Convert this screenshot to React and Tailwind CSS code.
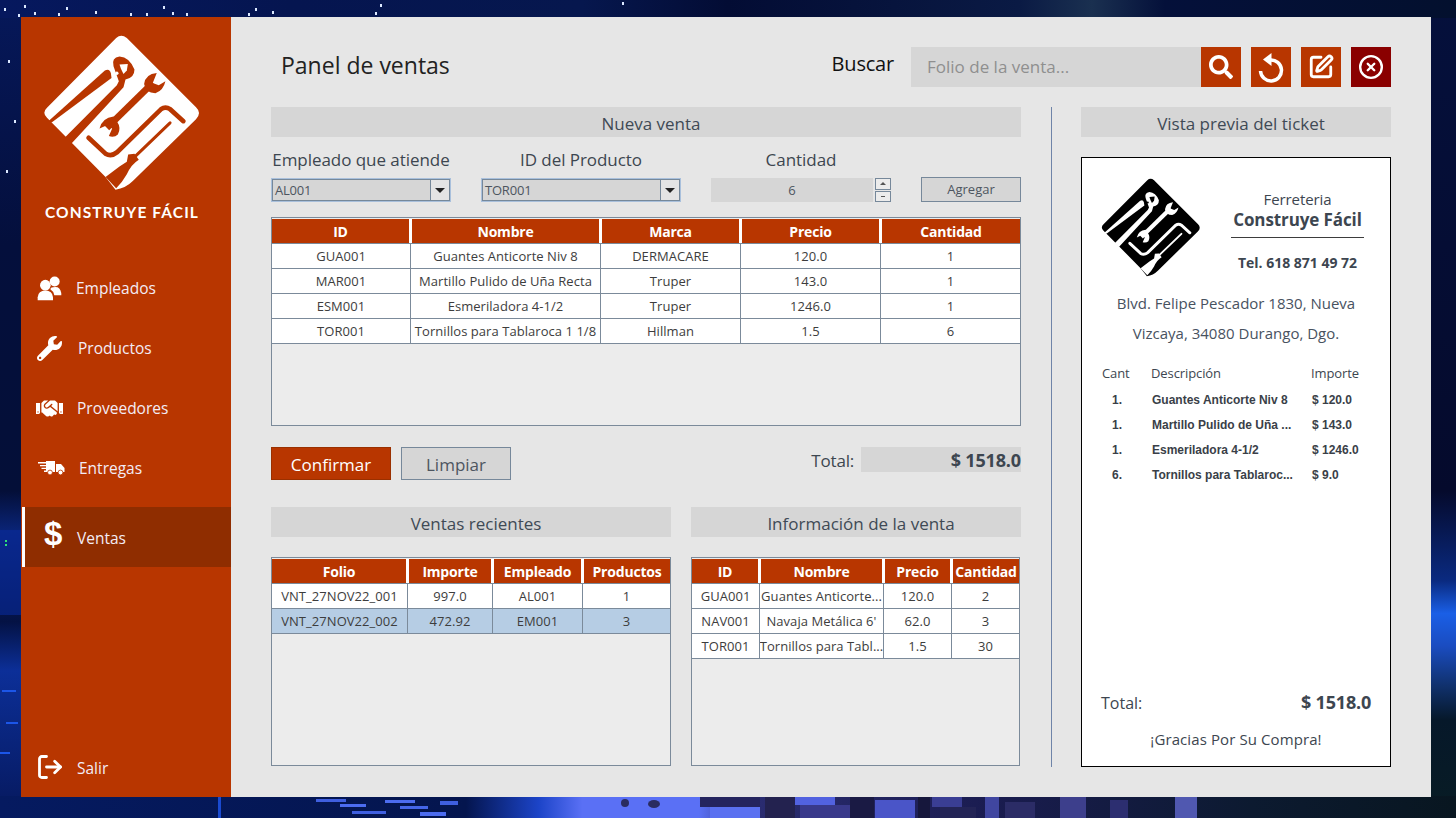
import { FaWrench, FaHandshake, FaSearch } from "react-icons/fa";
import { CircleX, LogOut, SquarePen } from "lucide-react";

function PeopleIcon() {
  return (
    <svg viewBox="50 42 75 77" className="w-[25px] h-[26px]" fill="#fff">
      <circle cx="75" cy="72" r="16" />
      <path d="M52 117V108Q54 88 75 88Q96 88 98 108V117Z" />
      <circle cx="103" cy="61" r="15" />
      <path d="M92 80Q102 76 112 78Q123 84 123 102H102Q100 90 90 84Z" />
    </svg>
  );
}

function TruckIcon() {
  return (
    <svg viewBox="0 0 27 14" className="w-[27px] h-[14px]" fill="#fff">
      <path d="M0 1H17V2.4H0ZM2 4H17V5.2H2ZM3.5 6.8H17V8H3.5ZM6 9.6H17V11H6Z" />
      <path d="M8 0H17V11H8Z" />
      <path d="M18 3H23L26.5 7V11H18Z" />
      <circle cx="12" cy="11.5" r="2.4" stroke="#b83600" strokeWidth="0.8" />
      <circle cx="22.5" cy="11.5" r="2.4" stroke="#b83600" strokeWidth="0.8" />
    </svg>
  );
}

function ResetIcon() {
  return (
    <svg viewBox="0 0 40 40" className="w-10 h-10" fill="none">
      <path d="M19 13A10.5 10.5 0 1 1 9.5 24" stroke="#fff" strokeWidth="3.5" />
      <path d="M20.5 6V19L12 12.5Z" fill="#fff" />
    </svg>
  );
}

const NAV = [
  { icon: <PeopleIcon />, label: "Empleados", iconBox: "pl-[16px] w-[55px]" },
  { icon: <FaWrench size={25} className="text-white" />, label: "Productos", iconBox: "pl-[16px] w-[57px]" },
  { icon: <FaHandshake size={27} className="text-white" />, label: "Proveedores", iconBox: "pl-[15px] w-[56px]" },
  { icon: <TruckIcon />, label: "Entregas", iconBox: "pl-[17px] w-[58px]" },
];

const PRODUCTS = [
  ["GUA001", "Guantes Anticorte Niv 8", "DERMACARE", "120.0", "1"],
  ["MAR001", "Martillo Pulido de Uña Recta", "Truper", "143.0", "1"],
  ["ESM001", "Esmeriladora 4-1/2", "Truper", "1246.0", "1"],
  ["TOR001", "Tornillos para Tablaroca 1 1/8", "Hillman", "1.5", "6"],
];
const SALES = [
  ["VNT_27NOV22_001", "997.0", "AL001", "1"],
  ["VNT_27NOV22_002", "472.92", "EM001", "3"],
];
const SALE_INFO = [
  ["GUA001", "Guantes Anticorte...", "120.0", "2"],
  ["NAV001", "Navaja Metálica 6'", "62.0", "3"],
  ["TOR001", "Tornillos para Tabl...", "1.5", "30"],
];
const TICKET = [
  ["1.", "Guantes Anticorte Niv 8", "$ 120.0"],
  ["1.", "Martillo Pulido de Uña ...", "$ 143.0"],
  ["1.", "Esmeriladora 4-1/2", "$ 1246.0"],
  ["6.", "Tornillos para Tablaroc...", "$ 9.0"],
];

const STARS = [[4,8],[18,14],[24,5],[34,12],[58,13],[66,7],[95,11],[130,13],[146,13],[163,6],[172,12],[186,13],[248,13],[255,8],[272,11],[375,12],[380,4],[622,2],[8,60],[14,120],[6,170]];
const BOTTOM_PATCHES = [
  // [x, width, y, height, colour] irregular paint strokes of the wallpaper
  [316,30,799,3,"#3f5fe0"],[340,26,804,3,"#4c6cf0"],[352,34,811,3,"#3f5fe0"],[385,30,800,3,"#4c6cf0"],[400,28,806,3,"#4566e8"],[420,26,812,4,"#4c6cf0"],[440,18,801,4,"#3f5fe0"],[218,3,797,21,"#1a4ad0"],
  [700,60,797,10,"#24245e"],[710,50,807,11,"#5a70f0"],[765,30,797,21,"#23224f"],[795,40,797,8,"#5262e0"],[800,50,805,13,"#39398a"],[850,24,797,21,"#1a1a44"],[875,40,800,18,"#4a55c8"],[918,12,797,21,"#16173c"],[932,30,797,10,"#3a3e94"],[940,36,807,11,"#232456"],[985,14,797,21,"#4046a0"],[1005,30,802,16,"#2b2c66"],[1060,26,797,21,"#3d3f8c"],[1110,18,800,18,"#2c2e70"],[1175,22,797,21,"#5058b0"],
];

function Wallpaper() {
  return (
    <svg className="absolute inset-0" width="1456" height="818" viewBox="0 0 1456 818" preserveAspectRatio="none">
      <defs>
        <linearGradient id="left" x1="0" y1="0" x2="0" y2="1">
          <stop offset="0" stopColor="#06185a" />
          <stop offset="0.3" stopColor="#040f3c" />
          <stop offset="0.6" stopColor="#040f38" />
          <stop offset="0.65" stopColor="#0a2478" />
          <stop offset="0.76" stopColor="#041244" />
          <stop offset="0.82" stopColor="#0c2f98" />
          <stop offset="1" stopColor="#06185c" />
        </linearGradient>
        <linearGradient id="right" x1="0" y1="0" x2="0" y2="1">
          <stop offset="0" stopColor="#05103c" />
          <stop offset="0.6" stopColor="#050a2c" />
          <stop offset="0.71" stopColor="#0a2a80" />
          <stop offset="0.75" stopColor="#1a5fe6" />
          <stop offset="0.79" stopColor="#1a4cc0" />
          <stop offset="0.84" stopColor="#10306a" />
          <stop offset="0.88" stopColor="#06182a" />
          <stop offset="1" stopColor="#081c24" />
        </linearGradient>
        <linearGradient id="top" x1="0" y1="0" x2="1" y2="0">
          <stop offset="0" stopColor="#06185e" />
          <stop offset="0.2" stopColor="#051550" />
          <stop offset="0.4" stopColor="#06174e" />
          <stop offset="0.5" stopColor="#030c34" />
          <stop offset="0.7" stopColor="#0a1a44" />
          <stop offset="0.75" stopColor="#1a3050" />
          <stop offset="0.8" stopColor="#04103a" />
          <stop offset="1" stopColor="#03102e" />
        </linearGradient>
        <linearGradient id="bottom" x1="0" y1="0" x2="1" y2="0">
          <stop offset="0" stopColor="#051a60" />
          <stop offset="0.32" stopColor="#04154e" />
          <stop offset="0.37" stopColor="#1c44c8" />
          <stop offset="0.4" stopColor="#5a70f5" />
          <stop offset="0.48" stopColor="#5a70f5" />
          <stop offset="0.52" stopColor="#2a2c70" />
          <stop offset="0.68" stopColor="#1a1c50" />
          <stop offset="0.86" stopColor="#0c1a30" />
          <stop offset="1" stopColor="#081620" />
        </linearGradient>
      </defs>
      <rect width="1456" height="818" fill="#040f3e" />
      <rect width="22" height="818" fill="url(#left)" />
      <rect x="1430" width="26" height="818" fill="url(#right)" />
      <rect width="1456" height="18" fill="url(#top)" />
      <rect y="796" width="1456" height="22" fill="url(#bottom)" />
      {BOTTOM_PATCHES.map(([x, w, y, h, fill], i) => (
        <rect key={i} x={x} y={y} width={w} height={h} fill={fill} />
      ))}
      <ellipse cx="625" cy="803" rx="4" ry="4" fill="#2a2c60" />
      <ellipse cx="654" cy="804" rx="6" ry="4" fill="#2a2c60" />
      <rect x="0" y="530" width="21" height="85" fill="#0a2ca0" opacity="0.55" />
      <rect x="5" y="540" width="2" height="2" fill="#2fe07a" />
      <rect x="5" y="544" width="2" height="2" fill="#2fe07a" />
      <rect x="2" y="690" width="14" height="2" fill="#1c56e8" />
      <rect x="6" y="722" width="12" height="2" fill="#1c56e8" />
      <rect x="0" y="752" width="10" height="2" fill="#1c56e8" />
      {STARS.map(([x, y], i) => (
        <rect key={i} x={x} y={y} width="2" height="3" fill="#dbe8ff" />
      ))}
    </svg>
  );
}

// logo diamond, tools are cut out in the background colour
function Logo({ fg, bg, className }) {
  return (
    <svg viewBox="70 55 475 475" className={className}>
      <path
        d="M290 70Q305 56 322 70L530 278Q548 295 530 314L340 500Q318 522 288 526L258 488L82 310Q66 295 82 280Z"
        fill={fg}
      />
      {/* pliers */}
      <path d="M86 320L256 168Q270 160 274 176L276 190L96 324Z" fill={bg} />
      <path d="M135 370L292 212L298 200L282 155Q275 130 300 126Q330 128 345 165Q345 190 318 195L312 218L155 388Z" fill={bg} />
      <path d="M300 150L325 148L322 168L312 178Q304 165 300 150Z" fill={fg} />
      <circle cx="292" cy="176" r="5" fill={fg} />
      {/* wrench */}
      <path d="M262 340L400 205" stroke={bg} strokeWidth="20" fill="none" />
      <path d="M412 175Q378 178 374 208Q378 235 408 236Q432 228 438 200L418 212L400 205L412 175Z" fill={bg} />
      <path d="M240 342Q248 310 282 306L292 320Q306 340 295 360Q285 370 268 365L278 342L262 332Z" fill={bg} />
      {/* allen key */}
      <path
        d="M207 370L258 418Q275 428 292 414L425 284Q438 274 452 284L492 320"
        stroke={bg}
        strokeWidth="14"
        strokeLinecap="round"
        fill="none"
      />
      {/* screwdriver */}
      <path d="M452 325L348 425" stroke={bg} strokeWidth="9" strokeLinecap="round" fill="none" />
      <path d="M326 420L345 418L358 436Q335 450 322 480Q308 505 290 522L258 488L300 456L322 442Z" fill={bg} />
    </svg>
  );
}

function DataTable({ columns, rows, selected, className }) {
  return (
    <div className={`border border-[#7b8a9a] bg-[#ececec] text-[#3d3d3d] h-[209px] pt-px font-['Open_Sans',sans-serif] ${className}`}>
      <div className="flex h-[25px] border-b border-[#7b8a9a]">
        {columns.map((c) => (
          <div
            key={c.title}
            style={{ width: c.width }}
            className="bg-[#b83600] border-r-2 border-l border-white last:border-r-0 first:border-l-0 flex items-center justify-center text-white text-[14px] font-bold tracking-[-0.2px] shrink-0"
          >
            {c.title}
          </div>
        ))}
      </div>
      {rows.map((row, r) => (
        <div key={r} className={`flex h-[25px] border-b border-[#7b8a9a] ${r === selected ? "bg-[#b6cde4]" : "bg-white"}`}>
          {row.map((cell, i) => (
            <div
              key={i}
              style={{ width: columns[i].width }}
              className="border-r border-[#7b8a9a] last:border-r-0 pt-[2px] flex items-center justify-center text-[13px] tracking-[0.05px] whitespace-nowrap overflow-hidden shrink-0"
            >
              {cell}
            </div>
          ))}
        </div>
      ))}
    </div>
  );
}

function SectionBar({ children, className }) {
  return (
    <div className={`bg-[#d6d6d6] h-[30px] pl-[10px] pt-[3px] flex items-center justify-center text-[17px] text-[#404a55] ${className}`}>
      {children}
    </div>
  );
}

function Combo({ value, width }) {
  return (
    <div className={`${width} h-[24px] border border-[#a9c0dc] bg-[#d6d6d6] p-0`}>
      <div className="h-full border border-[#76889a] flex">
        <div className="flex-1 text-[13px] text-[#4d5560] pl-[2px] leading-[20px] tracking-[-0.2px]">{value}</div>
        <div className="w-[19px] border-l border-[#76889a] bg-[#e4e4e4] flex items-center justify-center">
          <div className="w-0 h-0 border-x-[5px] border-x-transparent border-t-[5px] border-t-[#222]" />
        </div>
      </div>
    </div>
  );
}

function IconButton({ children, color }) {
  return <button className={`w-10 h-10 flex items-center justify-center text-white ${color}`}>{children}</button>;
}

export default function App() {
  return (
    <div className="relative w-[1456px] h-[818px] overflow-hidden pl-[21px] pt-[17px] font-['Open_Sans',sans-serif]">
      <Wallpaper />

      <div className="relative flex w-[1410px] h-[780px] bg-[#e6e6e6]">
        {/* sidebar */}
        <aside className="w-[210px] h-full bg-[#b83600] flex flex-col text-[#f3ecf6]">
          <div className="h-[241px] pt-[16px] pl-[22px]">
            <Logo fg="#ffffff" bg="#b83600" className="w-[158px] h-[158px]" />
            <div className="mt-[10px] -ml-[1px] w-[160px] text-center text-white text-[15.5px] font-bold font-['Lato',sans-serif] tracking-[1.1px] whitespace-nowrap">
              CONSTRUYE FÁCIL
            </div>
          </div>

          {NAV.map(({ icon, label, iconBox }) => (
            <div key={label} className="h-[60px] flex items-center">
              <div className={iconBox}>{icon}</div>
              <span className="text-[15.5px] mt-[2px]">{label}</span>
            </div>
          ))}

          <div className="mt-[9px] ml-px h-[60px] flex items-center bg-[#8f2d00] border-l-[3px] border-white">
            <div className="pl-[19px] w-[52px] text-white text-[33px] font-bold font-['Liberation_Sans',sans-serif] leading-none -mt-[8px]">$</div>
            <span className="text-[15.5px] mt-[4px]">Ventas</span>
          </div>

          <div className="mt-auto mb-[12px] h-[36px] flex items-center">
            <div className="pl-[15px] w-[56px]">
              <LogOut size={28} strokeWidth={2.4} className="text-white" />
            </div>
            <span className="text-[15.5px] mt-[4px]">Salir</span>
          </div>
        </aside>

        {/* main area */}
        <main className="flex-1 pl-10 pr-10 pt-[30px] flex flex-col">
          <header className="h-10 flex items-center">
            <h1 className="pl-[10px] text-[23px] text-[#222] -mt-[3px]">Panel de ventas</h1>
            <span className="ml-auto mr-[17px] text-[20px] text-[#111] tracking-[-0.2px] -mt-[7px]">Buscar</span>
            <div className="w-[290px] h-10 bg-[#d6d6d6] pl-[16px] flex items-center text-[17px] text-[#8f8f8f]">
              Folio de la venta...
            </div>
            <IconButton color="bg-[#b83600]"><FaSearch size={24} /></IconButton>
            <div className="w-[10px]" />
            <IconButton color="bg-[#b83600]"><ResetIcon /></IconButton>
            <div className="w-[10px]" />
            <IconButton color="bg-[#b83600]"><SquarePen size={26} strokeWidth={2.6} /></IconButton>
            <div className="w-[10px]" />
            <IconButton color="bg-[#8a0000]"><CircleX size={26} strokeWidth={2.2} /></IconButton>
          </header>

          <div className="flex mt-5 h-[660px]">
            {/* left column */}
            <section className="w-[750px]">
              <SectionBar>Nueva venta</SectionBar>

              <div className="flex gap-[30px] mt-[11px] h-[54px]">
                <div className="w-[180px]">
                  <div className="text-center text-[17px] text-[#3d4650] tracking-[-0.05px] leading-[24px] whitespace-nowrap">Empleado que atiende</div>
                  <div className="mt-[6px]"><Combo value="AL001" width="w-[180px]" /></div>
                </div>
                <div className="w-[200px]">
                  <div className="text-center text-[17px] text-[#3d4650] tracking-[-0.05px] leading-[24px]">ID del Producto</div>
                  <div className="mt-[6px]"><Combo value="TOR001" width="w-[200px]" /></div>
                </div>
                <div className="w-[180px]">
                  <div className="text-center text-[17px] text-[#3d4650] tracking-[-0.05px] leading-[24px]">Cantidad</div>
                  <div className="mt-[6px] flex h-[24px]">
                    <div className="flex-1 bg-[#d6d6d6] text-center text-[13px] text-[#4d5560] leading-[24px]">6</div>
                    <div className="w-[16px] flex flex-col gap-[1px] ml-[2px]">
                      <div className="flex-1 border border-[#76889a] bg-[#ececec] flex items-center justify-center">
                        <div className="w-0 h-0 border-x-[3px] border-x-transparent border-b-[3px] border-b-[#555]" />
                      </div>
                      <div className="flex-1 border border-[#76889a] bg-[#ececec] flex items-center justify-center">
                        <div className="w-[4px] h-px bg-[#555]" />
                      </div>
                    </div>
                  </div>
                </div>
                <div className="w-[100px] pt-[28px]">
                  <button className="w-[100px] h-[25px] border border-[#76889a] bg-[#d6d6d6] text-[13px] text-[#4d5560]">Agregar</button>
                </div>
              </div>

              <DataTable
                className="mt-[15px] w-[750px]"
                columns={[
                  { title: "ID", width: 139 },
                  { title: "Nombre", width: 190 },
                  { title: "Marca", width: 140 },
                  { title: "Precio", width: 140 },
                  { title: "Cantidad", width: 139 },
                ]}
                rows={PRODUCTS}
              />

              <div className="flex items-start mt-[21px] h-[33px]">
                <button className="w-[120px] h-[33px] pt-[2px] bg-[#b83600] border border-[#9a3000] text-white text-[17px]">Confirmar</button>
                <button className="ml-[10px] w-[110px] h-[33px] pt-[2px] bg-[#d6d6d6] border border-[#76889a] text-[17px] text-[#4d5560]">Limpiar</button>
                <span className="ml-auto mr-[7px] text-[17px] text-[#3d4650] leading-[27px] tracking-[-0.2px]">Total:</span>
                <div className="w-[160px] h-[25px] bg-[#d6d6d6] text-right text-[18px] font-bold text-[#3d4650] leading-[27px] tracking-[-0.15px]">$ 1518.0</div>
              </div>

              <div className="flex gap-5 mt-[27px]">
                <div className="w-[400px]">
                  <SectionBar>Ventas recientes</SectionBar>
                  <DataTable
                    className="mt-5"
                    selected={1}
                    columns={[
                      { title: "Folio", width: 136 },
                      { title: "Importe", width: 85 },
                      { title: "Empleado", width: 90 },
                      { title: "Productos", width: 87 },
                    ]}
                    rows={SALES}
                  />
                </div>
                <div className="w-[330px]">
                  <SectionBar>Información de la venta</SectionBar>
                  <DataTable
                    className="mt-5 w-[329px]"
                    columns={[
                      { title: "ID", width: 68 },
                      { title: "Nombre", width: 124 },
                      { title: "Precio", width: 68 },
                      { title: "Cantidad", width: 67 },
                    ]}
                    rows={SALE_INFO}
                  />
                </div>
              </div>
            </section>

            <div className="w-px ml-[30px] mr-[29px] bg-[#6f84a8]" />

            {/* ticket preview */}
            <section className="w-[310px]">
              <SectionBar>Vista previa del ticket</SectionBar>
              <div className="mt-5 h-[610px] bg-white border border-black text-[#3d4650] flex flex-col">
                <div className="flex pt-[19px] pl-[19px]">
                  <Logo fg="#000000" bg="#ffffff" className="w-[100px] h-[100px]" />
                  <div className="ml-[30px] w-[133px] text-center">
                    <div className="mt-[12px] text-[15px] leading-[20px] tracking-[-0.1px]">Ferreteria</div>
                    <div className="text-[17px] font-bold leading-[22px] tracking-[-0.1px] whitespace-nowrap pb-[6px] border-b border-[#3d3d3d]">Construye Fácil</div>
                    <div className="mt-[15px] text-[14px] font-bold leading-[20px] whitespace-nowrap">Tel. 618 871 49 72</div>
                  </div>
                </div>
                <div className="mt-[11px] text-center text-[15px] leading-[30px] text-[#48525f]">
                  <div>Blvd. Felipe Pescador 1830, Nueva</div>
                  <div>Vizcaya, 34080 Durango, Dgo.</div>
                </div>
                <div className="flex mt-[15px] pl-[20px] text-[13px] leading-[20px] tracking-[-0.1px]">
                  <span className="w-[49px]">Cant</span>
                  <span className="w-[160px]">Descripción</span>
                  <span>Importe</span>
                </div>
                <div className="mt-[4px] font-['Liberation_Sans',sans-serif] font-bold text-[12px] text-[#3a3f48]">
                  {TICKET.map(([qty, name, price]) => (
                    <div key={name} className="flex h-[25px] items-center pl-[30px]">
                      <span className="w-[40px]">{qty}</span>
                      <span className="w-[160px] whitespace-nowrap">{name}</span>
                      <span>{price}</span>
                    </div>
                  ))}
                </div>
                <div className="mt-auto flex items-center justify-between px-[19px]">
                  <span className="text-[16px]">Total:</span>
                  <span className="text-[18px] font-bold tracking-[-0.2px]">$ 1518.0</span>
                </div>
                <div className="mt-[13px] mb-[17px] text-center text-[15px] leading-[20px] tracking-[0.1px]">¡Gracias Por Su Compra!</div>
              </div>
            </section>
          </div>
        </main>
      </div>
    </div>
  );
}
